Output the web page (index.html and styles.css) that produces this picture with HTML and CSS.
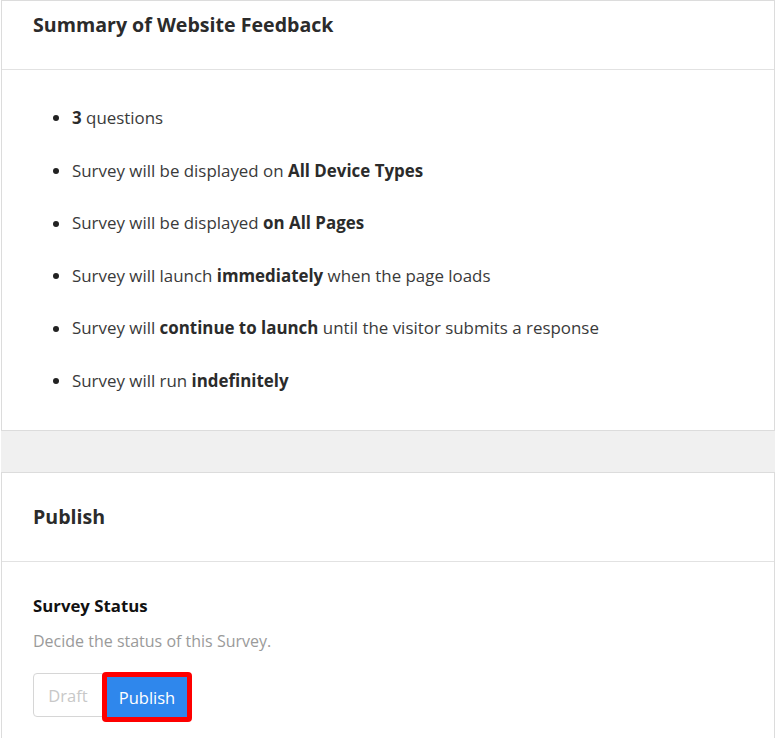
FILE: index.html
```html
<!DOCTYPE html>
<html>
<head>
<meta charset="utf-8">
<link rel="stylesheet" href="styles.css">
</head>
<body>
<div class="page">
  <section class="card">
    <header class="card-head">
      <h2 class="card-title">Summary of Website Feedback</h2>
    </header>
    <div class="card-body summary-body">
      <ul class="summary">
        <li><b>3</b> questions</li>
        <li>Survey will be displayed on <b>All Device Types</b></li>
        <li>Survey will be displayed <b>on All Pages</b></li>
        <li>Survey will launch <b>immediately</b> when the page loads</li>
        <li>Survey will <b>continue to launch</b> until the visitor submits a response</li>
        <li>Survey will run <b>indefinitely</b></li>
      </ul>
    </div>
  </section>
  <div class="spacer"></div>
  <section class="card">
    <header class="card-head card-head-2">
      <h2 class="card-title">Publish</h2>
    </header>
    <div class="card-body publish-body">
      <h3 class="field-title">Survey Status</h3>
      <p class="field-desc">Decide the status of this Survey.</p>
      <div class="btn-group">
        <button class="btn btn-draft">Draft</button>
        <button class="btn btn-publish">Publish</button>
      </div>
    </div>
  </section>
</div>
</body>
</html>
```
FILE: styles.css
```css
* { box-sizing: border-box; }
html, body { margin: 0; padding: 0; }
body {
  background: #ffffff;
  font-family: "Open Sans", "Noto Sans", sans-serif;
  color: #3a3a3a;
}
.page {
  margin-left: 1px;
  width: 774px;
  height: 738px;
  background: #f0f0f0;
}
.card {
  background: #ffffff;
  border: 1px solid #dcdcdc;
}
.card-head {
  height: 69px;
  padding: 10px 0 0 31px;
  border-bottom: 1px solid #e2e2e2;
}
.card-head-2 {
  height: 89px;
  padding-top: 30px;
}
.card-title {
  margin: 0;
  font-size: 19.6px;
  line-height: 28px;
  font-weight: 700;
  color: #2b2b2b;
}
.summary-body {
  height: 360px;
  padding: 35px 0 0 31px;
}
.summary {
  margin: 0;
  padding: 0 0 0 39px;
  list-style: none;
  display: flex;
  flex-direction: column;
  gap: 26.6px;
}
.summary li {
  font-size: 16.9px;
  line-height: 26px;
  color: #3a3a3a;
}
.summary li::before {
  content: "";
  display: inline-block;
  width: 6px;
  height: 6px;
  border-radius: 50%;
  background: #222222;
  margin: 0 13.5px 0 -19.5px;
  vertical-align: middle;
  position: relative;
  top: -1px;
}
.summary b { font-weight: 700; color: #2b2b2b; }
.spacer { height: 41px; }
.publish-body {
  height: 176px;
  padding: 32px 0 0 31px;
}
.field-title {
  margin: 0;
  font-size: 16.8px;
  line-height: 24px;
  font-weight: 700;
  color: #111111;
}
.field-desc {
  margin: 11px 0 0;
  font-size: 16px;
  line-height: 24px;
  color: #9a9a9a;
}
.btn-group {
  display: flex;
  align-items: flex-start;
  margin-top: 19px;
}
.btn {
  font-family: inherit;
  font-size: 16.5px;
  cursor: pointer;
}
.btn-draft {
  margin-top: 1px;
  width: 70px;
  height: 44px;
  background: #ffffff;
  color: #c8c8c8;
  border: 1px solid #d6d6d6;
  border-radius: 4px 0 0 4px;
}
.btn-publish {
  margin-left: -1px;
  width: 90px;
  height: 50px;
  background: #2f87ec;
  color: #ffffff;
  border: 5px solid #fe0000;
  border-radius: 4px;
}
```
